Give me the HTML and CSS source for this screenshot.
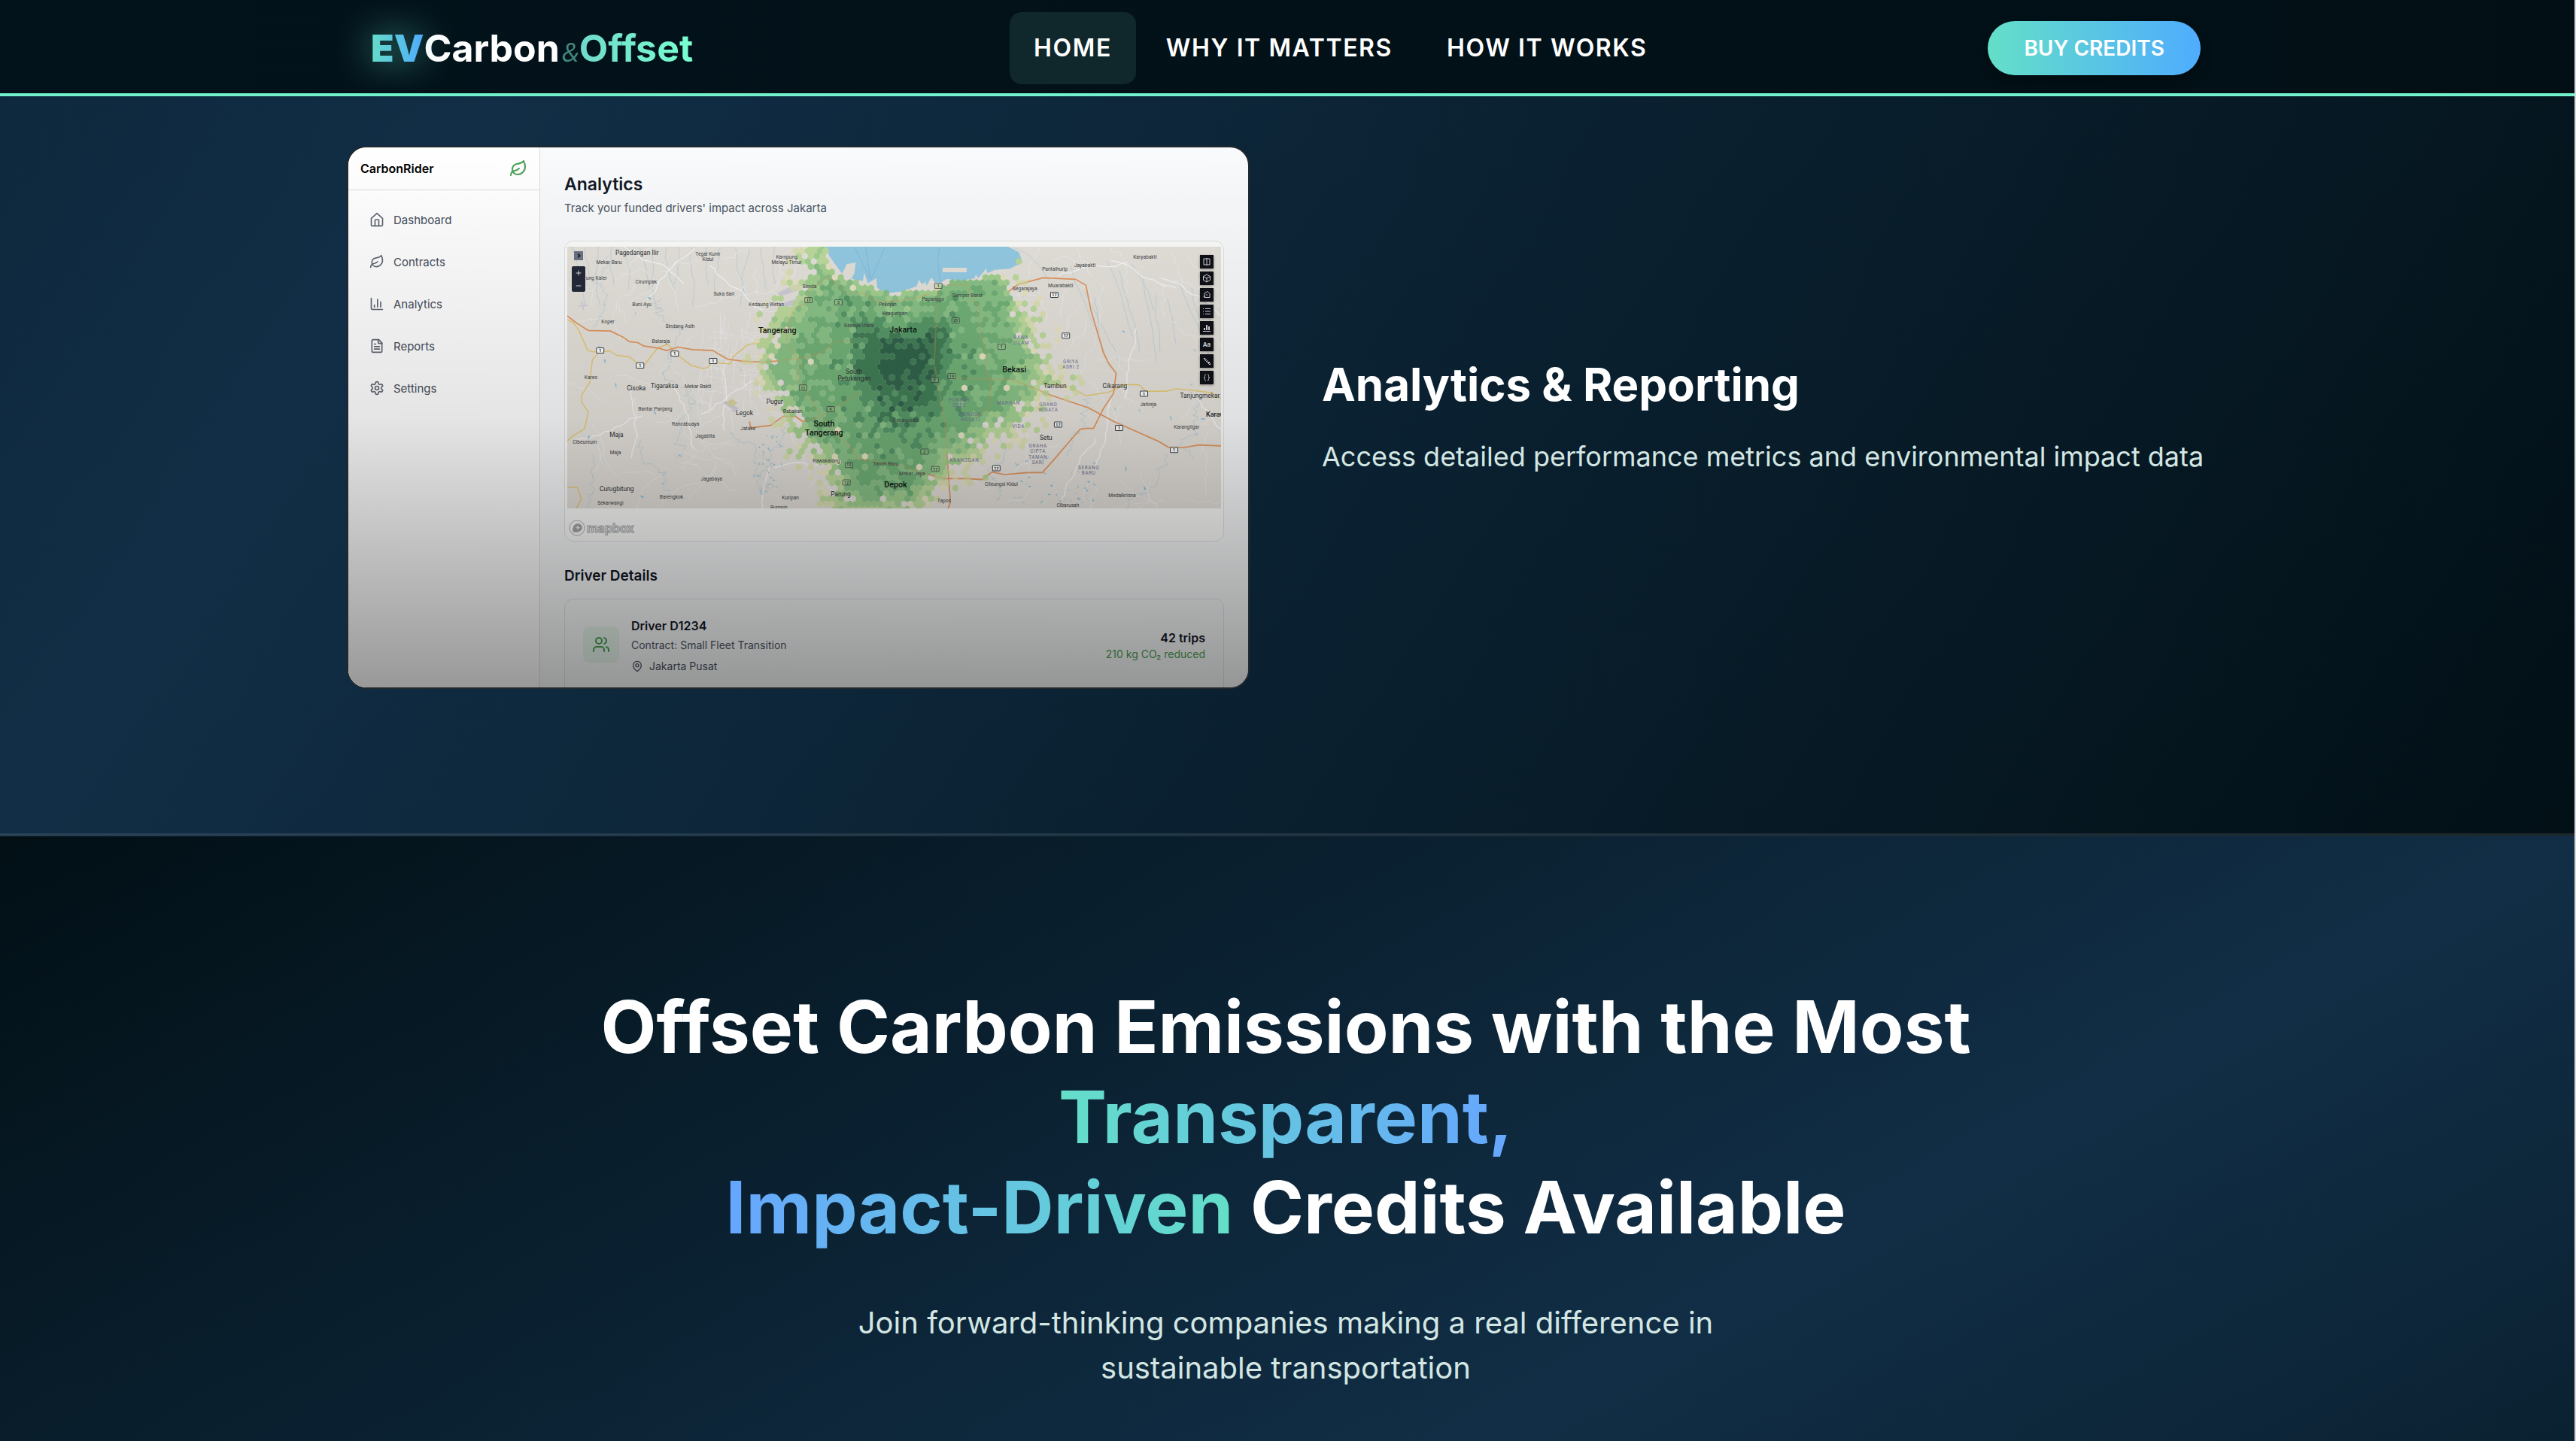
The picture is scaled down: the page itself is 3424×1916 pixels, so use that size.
FILE: index.html
```html
<!DOCTYPE html>
<html lang="en">
<head>
<meta charset="utf-8">
<meta name="viewport" content="width=device-width, initial-scale=1">
<title>EV Carbon &amp; Offset</title>
<link rel="stylesheet" href="styles.css">
</head>
<body>
<header class="site-header">
  <div class="header-inner">
    <a class="logo" href="#"><span class="logo-ev">EV</span><span class="logo-carbon">Carbon</span><span class="logo-amp">&amp;</span><span class="logo-offset">Offset</span></a>
    <nav class="main-nav">
      <a class="nav-link active" href="#home">HOME</a>
      <a class="nav-link" href="#why">WHY IT MATTERS</a>
      <a class="nav-link" href="#how">HOW IT WORKS</a>
    </nav>
    <button class="buy" type="button">BUY CREDITS</button>
  </div>
</header>

<main>
<section class="feature">
  <div class="feature-inner">
    <div class="preview">
      <aside class="side">
        <div class="side-head">
          <span class="side-title">CarbonRider</span>
          <svg class="icon leaf" viewBox="0 0 24 24"><path d="M11 20A7 7 0 0 1 9.8 6.1C15.5 5 17 4.48 19 2c1 2 2 4.18 2 8 0 5.5-4.78 10-10 10Z"/><path d="M2 21c0-3 1.85-5.36 5.08-6C9.5 14.52 12 13 13 12"/></svg>
        </div>
        <nav class="side-nav">
          <a href="#dashboard"><svg class="icon" viewBox="0 0 24 24"><path d="m3 10 9-8 9 8v10a2 2 0 0 1-2 2H5a2 2 0 0 1-2-2z"/><path d="M9 22v-9a1 1 0 0 1 1-1h4a1 1 0 0 1 1 1v9"/></svg>Dashboard</a>
          <a href="#contracts"><svg class="icon" viewBox="0 0 24 24"><path d="M11 20A7 7 0 0 1 9.8 6.1C15.5 5 17 4.48 19 2c1 2 2 4.18 2 8 0 5.5-4.78 10-10 10Z"/><path d="M2 21c0-3 1.85-5.36 5.08-6C9.5 14.52 12 13 13 12"/></svg>Contracts</a>
          <a href="#analytics"><svg class="icon" viewBox="0 0 24 24"><path d="M3 3v16a2 2 0 0 0 2 2h16"/><path d="M18 17V9"/><path d="M13 17V5"/><path d="M8 17v-3"/></svg>Analytics</a>
          <a href="#reports"><svg class="icon" viewBox="0 0 24 24"><path d="M15 2H6a2 2 0 0 0-2 2v16a2 2 0 0 0 2 2h12a2 2 0 0 0 2-2V7Z"/><path d="M14 2v4a2 2 0 0 0 2 2h4"/><path d="M10 9H8"/><path d="M16 13H8"/><path d="M16 17H8"/></svg>Reports</a>
          <a href="#settings"><svg class="icon" viewBox="0 0 24 24"><path d="M12.22 2h-.44a2 2 0 0 0-2 2v.18a2 2 0 0 1-1 1.73l-.43.25a2 2 0 0 1-2 0l-.15-.08a2 2 0 0 0-2.73.73l-.22.38a2 2 0 0 0 .73 2.73l.15.1a2 2 0 0 1 1 1.72v.51a2 2 0 0 1-1 1.74l-.15.09a2 2 0 0 0-.73 2.73l.22.38a2 2 0 0 0 2.73.73l.15-.08a2 2 0 0 1 2 0l.43.25a2 2 0 0 1 1 1.73V20a2 2 0 0 0 2 2h.44a2 2 0 0 0 2-2v-.18a2 2 0 0 1 1-1.73l.43-.25a2 2 0 0 1 2 0l.15.08a2 2 0 0 0 2.73-.73l.22-.39a2 2 0 0 0-.73-2.73l-.15-.08a2 2 0 0 1-1-1.74v-.5a2 2 0 0 1 1-1.74l.15-.09a2 2 0 0 0 .73-2.73l-.22-.38a2 2 0 0 0-2.73-.73l-.15.08a2 2 0 0 1-2 0l-.43-.25a2 2 0 0 1-1-1.73V4a2 2 0 0 0-2-2z"/><circle cx="12" cy="12" r="3"/></svg>Settings</a>
        </nav>
      </aside>

      <div class="panel">
        <h3 class="panel-title">Analytics</h3>
        <p class="panel-sub">Track your funded drivers' impact across Jakarta</p>

        <div class="map-card">
          <div class="map">
            <svg class="map-svg" viewBox="74 54 2604 1044" role="img" aria-label="Driver activity around Jakarta">
              <rect x="74" y="54" width="2604" height="1044" fill="#e6e2dc"/>
              <g id="minor" class="line"></g>
              <g class="airport">
                <path d="M912 238l84-42 12 26-84 30zM922 282l90-28 8 20-90 26zM694 676l14-8 50 30-14 12zM738 704l10 8-26-2z"/>
                <path d="M118 290l36-2M132 270l6 36" class="airport-line"/>
                <path d="M708 672l22-12 22 16-24 18z" fill="#d8d4a0"/>
              </g>
              <path class="sea" d="M1105 54l12 36 30 42 22 30 18-38 36-8-6 46-12 20 46 8 6-32 14 42 34-20 4 38 36 22 60-8 60-20 10-26 12 18 14-10 4 16 20-34 12 20h26l24-14 50 8 60-10 4-16 10 16 32-40 4 20 30-14 60-4 50-26-14-40-44-22-20-8H1105z"/>
              <path d="M1569 138h96v18h-96z" fill="#e6e2dc"/>
              <path class="sea-line" d="M1218 54l62 128M1262 54l20 130M1340 54l-56 130M1556 54l-6 60 10 90"/>
              <path class="river" d="M1852 58c60 20 100 60 140 130"/>
              <g id="heat"></g>
              <g id="roads">
                <g class="road-yellow">
                  <path d="M74 345l24 12 22 30 34 78 20 8 56-2 12-2 30 18 50 6 42 32 16 2 54-70 40-14 44 46 50 38 44 12 20-2 16-22 76 6 12-30 60-48 60-6 20-20 20 0"/>
                  <path d="M204 470l-30 34-10 90-32 50 0 30 26 40-16 66-46 28-22 20M74 1012l40 2 16 44-20 40"/>
                  <path d="M1940 592l140 22 60 34 90-14 60-30h60l30 26 80 0 40-10 60 6 80 10 40 24"/>
                </g>
                <g class="road-orange">
                  <path d="M74 330l40 30 44 28 88 2 50 24 24 18 34 4 26 14 56 8 34 10 44-14 60 10 80 4 58 34 56 8 80 4 60-4 60-8 40-4 70-16 70-52 60 0"/>
                  <path d="M988 494l-32-40-8-40 8-60 22-50 40-22 16-10 4-40 72-60 40 30 30 34 80 6 50 32 60-4 80-8 66-20"/>
                  <path d="M800 750l4 26 80-10 50-36h50l26 20 40-8 50-20 140-90"/>
                  <path d="M988 494l18 30-20 60 30 24 20 40 40 70 60 70 60 60 40 52 160 24 100 34 80 20h90l60 4 40-30 50 10 90-8h60l40-44 60-70 50-58 24-4h30l40-80 40-60 10-80-30-40-20-40-50-170-20-100-40-24-130-6-100 26-40 30"/>
                  <path d="M1586 206h78l20 54 30 30 6 120 24 70-4 60 20 50-2 100-30 30-30 12M1550 220l-14 300 40 220 24 330-16 50"/>
                  <path d="M1600 576l200 8 40-4 160 66 150 50 100 54 180 80 40 24h60l60-10 100 4"/>
                </g>
              </g>
              <use href="#roads" class="roads-over"/>
              <g class="shields">
                <g class="shield"><rect x="190" y="457" width="30" height="21" rx="3"/><text x="205" y="474">1</text></g>
                <g class="shield"><rect x="349" y="517" width="30" height="21" rx="3"/><text x="364" y="534">1</text></g>
                <g class="shield"><rect x="487" y="470" width="30" height="21" rx="3"/><text x="502" y="487">1</text></g>
                <g class="shield"><rect x="640" y="499" width="30" height="21" rx="3"/><text x="655" y="516">1</text></g>
                <g class="shield dim"><rect x="1020" y="256" width="30" height="21" rx="3"/><text x="1035" y="273">17</text></g>
                <g class="shield dim"><rect x="1139" y="265" width="30" height="21" rx="3"/><text x="1154" y="282">5</text></g>
                <g class="shield dim"><rect x="998" y="605" width="30" height="21" rx="3"/><text x="1013" y="622">11</text></g>
                <g class="shield dim"><rect x="1108" y="691" width="30" height="21" rx="3"/><text x="1123" y="708">9</text></g>
                <g class="shield dim"><rect x="1181" y="913" width="30" height="21" rx="3"/><text x="1196" y="930">12</text></g>
                <g class="shield dim"><rect x="1171" y="983" width="30" height="21" rx="3"/><text x="1186" y="1000">12</text></g>
                <g class="shield dim"><rect x="1537" y="199" width="30" height="21" rx="3"/><text x="1552" y="216">1</text></g>
                <g class="shield dim"><rect x="1606" y="337" width="30" height="21" rx="3"/><text x="1621" y="354">21</text></g>
                <g class="shield dim"><rect x="1789" y="442" width="30" height="21" rx="3"/><text x="1804" y="459">1</text></g>
                <g class="shield dim"><rect x="1522" y="574" width="30" height="21" rx="3"/><text x="1537" y="591">2</text></g>
                <g class="shield dim"><rect x="1590" y="559" width="30" height="21" rx="3"/><text x="1605" y="576">19</text></g>
                <g class="shield dim"><rect x="1482" y="860" width="30" height="21" rx="3"/><text x="1497" y="877">2</text></g>
                <g class="shield dim"><rect x="1525" y="929" width="30" height="21" rx="3"/><text x="1540" y="946">17</text></g>
                <g class="shield"><rect x="1999" y="235" width="30" height="21" rx="3"/><text x="2014" y="252">17</text></g>
                <g class="shield"><rect x="2045" y="398" width="30" height="21" rx="3"/><text x="2060" y="415">17</text></g>
                <g class="shield"><rect x="2014" y="752" width="30" height="21" rx="3"/><text x="2029" y="769">17</text></g>
                <g class="shield"><rect x="1768" y="926" width="30" height="21" rx="3"/><text x="1783" y="943">17</text></g>
                <g class="shield"><rect x="2356" y="629" width="30" height="21" rx="3"/><text x="2371" y="646">1</text></g>
                <g class="shield"><rect x="2257" y="766" width="30" height="21" rx="3"/><text x="2272" y="783">1</text></g>
                <g class="shield"><rect x="2476" y="853" width="30" height="21" rx="3"/><text x="2491" y="870">1</text></g>
              </g>
              <g class="label town">
                <text x="352" y="87">Pagedangan Ilir</text><text x="349" y="626">Cisoka</text><text x="461" y="617">Tigaraksa</text>
                <text x="780" y="726">Legok</text><text x="270" y="811">Maja</text><text x="271" y="1027">Curugbitung</text>
                <text x="900" y="679">Pugur</text><text x="1216" y="561">South</text><text x="1217" y="588">Petukangan</text>
                <text x="1163" y="1049">Parung</text><text x="2017" y="616">Tambun</text><text x="2255" y="616">Cikarang</text>
                <text x="2594" y="655">Tanjungmekar</text><text x="1981" y="823">Setu</text>
              </g>
              <g class="label village">
                <text x="240" y="123">Mekar Baru</text><text x="190" y="185">ung Kaler</text><text x="388" y="202">Cirumpak</text>
                <text x="634" y="91">Tegal Kunir</text><text x="634" y="111">Kidul</text><text x="698" y="248">Suka Sari</text>
                <text x="371" y="291">Buni Ayu</text><text x="236" y="360">Koper</text><text x="523" y="378">Sindang Asih</text>
                <text x="447" y="439">Balaraja</text><text x="867" y="290">Kedaung Wetan</text><text x="948" y="101">Kampung</text>
                <text x="948" y="122">Melayu Timur</text><text x="1039" y="218">Benda</text><text x="168" y="581">Kareo</text>
                <text x="594" y="618">Mekar Bakti</text><text x="424" y="708">Bantar Panjang</text><text x="545" y="766">Rancabuaya</text>
                <text x="794" y="784">Jatake</text><text x="623" y="814">Jagabita</text><text x="144" y="840">Cibeureum</text>
                <text x="266" y="882">Maja</text><text x="648" y="986">Jagabaya</text><text x="489" y="1059">Barengkok</text>
                <text x="246" y="1081">Sekarwangi</text><text x="963" y="1061">Kuripan</text><text x="917" y="1100">Rumpin</text>
                <text x="972" y="715">Babakan</text><text x="1106" y="915">Rawakalong</text><text x="1342" y="927">Tanah Baru</text>
                <text x="1447" y="965">Mekar Jaya</text><text x="1350" y="290">Pekojan</text><text x="1378" y="326">Keagungan</text>
                <text x="1236" y="374">Kedoya Utara</text><text x="1531" y="269">Papanggo</text><text x="1668" y="254">Semper Barat</text>
                <text x="1897" y="228">Segarajaya</text><text x="2016" y="149">Pantaihurip</text><text x="2136" y="135">Jayabakti</text>
                <text x="2039" y="216">Muarabakti</text><text x="2375" y="101">Karyabakti</text><text x="1422" y="751">Kebagusan</text>
                <text x="1803" y="1007">Cileungsi Kidul</text><text x="1575" y="1073">Tapos</text><text x="2068" y="1090">Cibarusah</text>
                <text x="2284" y="1052">Medalkrisna</text><text x="2388" y="690">Jatireja</text><text x="2541" y="779">Karangligar</text>
              </g>
              <g class="label area">
                <text x="1882" y="424">RAWA</text><text x="1882" y="445">SILAM</text><text x="2080" y="518">GRIYA</text><text x="2080" y="539">ASRI 2</text>
                <text x="1636" y="670">PONDOK</text><text x="1636" y="691">GEDE</text><text x="1831" y="683">MARHAN</text><text x="1680" y="728">PONDOK</text>
                <text x="1680" y="749">MELATI</text><text x="1990" y="689">GRAND</text><text x="1990" y="710">WISATA</text><text x="1871" y="777">VIDA</text>
                <text x="1949" y="855">GRAHA</text><text x="1949" y="876">CIPTA</text><text x="1949" y="898">TAMAN</text><text x="1949" y="919">SARI</text>
                <text x="1656" y="910">KRANGGAN</text><text x="2151" y="942">SERANG</text><text x="2151" y="963">BARU</text>
              </g>
              <g class="label city">
                <text x="911" y="398">Tangerang</text><text x="1412" y="395">Jakarta</text><text x="1855" y="555">Bekasi</text>
                <text x="1097" y="771">South</text><text x="1097" y="805">Tangerang</text><text x="1382" y="1013">Depok</text>
              </g>
              <g class="label edge"><text x="2618" y="731">Karawang</text></g>
            </svg>
            <div class="map-left">
              <button class="map-toggle" type="button" aria-label="Open panel"><svg viewBox="0 0 12 12"><path d="M5 3l3 3-3 3"/></svg></button>
              <div class="map-zoom">
                <button type="button" aria-label="Zoom in"><svg viewBox="0 0 12 12"><path d="M6 2v8M2 6h8"/></svg></button>
                <button type="button" aria-label="Zoom out"><svg viewBox="0 0 12 12"><path d="M2 6h8"/></svg></button>
              </div>
            </div>
            <div class="map-tools">
              <button type="button" aria-label="Split view"><svg viewBox="0 0 18 18"><path d="M5 5h8v8H5zM9 4v10"/></svg></button>
              <button type="button" aria-label="3D view"><svg viewBox="0 0 18 18"><path d="M9 4l4.500 2.500v5L9 14l-4.500-2.500v-5zM4.500 6.500L9 9l4.500-2.500M9 9v5"/></svg></button>
              <button type="button" aria-label="Draw shape"><svg viewBox="0 0 18 18"><path d="M6 7l4-2.500 3 3v5H6.500zM4.500 10.500l2 2.500M9 8v2"/></svg></button>
              <button type="button" aria-label="Layers"><svg viewBox="0 0 18 18"><path d="M7 5.500h7M7 9h7M7 12.500h7M4 5.500h1M4 9h1M4 12.500h1"/></svg></button>
              <button type="button" aria-label="Chart"><svg viewBox="0 0 18 18"><path d="M4 13.500h10"/><path class="bars" d="M6 12V9M9 12V5M12 12V7"/></svg></button>
              <button type="button">Aa</button>
              <button type="button" aria-label="Ruler"><svg viewBox="0 0 18 18"><path d="M5 6l1-1 8 8-1 1zM7 5l-2 2M13 10l-2 2"/></svg></button>
              <button type="button" aria-label="Code"><svg viewBox="0 0 18 18"><path d="M8 5c-2 0-1.500 1-1.500 2.500S6 9 5 9c1 0 1.500 0 1.500 1.500S6 13 8 13M10 5c2 0 1.500 1 1.500 2.500S12 9 13 9c-1 0-1.500 0-1.500 1.500S12 13 10 13"/></svg></button>
            </div>
          </div>
          <div class="map-foot">
            <svg class="mapbox-mark" viewBox="0 0 22 22"><circle cx="11" cy="11" r="10"/><path class="mark" d="M6 16c-1-4 0-7 2-9 2-2 6-2 8 0s2 5 0 7c-2 2-5 3-10 2z"/><path class="spark" d="M12 7l1 2.500 2.500 1-2.500 1L12 14l-1-2.500-2.500-1 2.500-1z"/></svg>
            <span class="mapbox-word">mapbox</span>
          </div>
        </div>

        <h4 class="drivers-title">Driver Details</h4>
        <div class="driver">
          <span class="driver-tile"><svg class="icon" viewBox="0 0 24 24"><path d="M16 21v-2a4 4 0 0 0-4-4H6a4 4 0 0 0-4 4v2"/><circle cx="9" cy="7" r="4"/><path d="M22 21v-2a4 4 0 0 0-3-3.87"/><path d="M16 3.130a4 4 0 0 1 0 7.750"/></svg></span>
          <div class="driver-info">
            <strong>Driver D1234</strong>
            <span class="contract">Contract: Small Fleet Transition</span>
            <span class="place"><svg class="icon" viewBox="0 0 24 24"><path d="M20 10c0 6-8 12-8 12s-8-6-8-12a8 8 0 0 1 16 0Z"/><circle cx="12" cy="10" r="3"/></svg>Jakarta Pusat</span>
          </div>
          <div class="driver-stats">
            <strong>42 trips</strong>
            <span>210 kg CO₂ reduced</span>
          </div>
        </div>
      </div>
    </div>

    <div class="feature-copy">
      <h2>Analytics &amp; Reporting</h2>
      <p>Access detailed performance metrics and environmental impact data</p>
    </div>
  </div>
</section>

<section class="hero">
  <h1>Offset Carbon Emissions with the Most<br><span class="grad-a">Transparent,</span><br><span class="grad-b">Impact-Driven</span> Credits Available</h1>
  <p>Join forward-thinking companies making a real difference in sustainable transportation</p>
</section>
</main>
<script src="map.js"></script>
</body>
</html>
```

FILE: styles.css
```css
* { box-sizing: border-box; }

body {
  margin: 0;
  min-height: 100vh;
  display: flex;
  flex-direction: column;
  overflow-x: hidden;
  border-right: 2px solid #dadada;
  background: #021016;
  font-family: Inter, "Liberation Sans", sans-serif;
  color: #fff;
}

h1, h2, h3, h4, p { margin: 0; }
a { color: inherit; text-decoration: none; }
button { border: 0; padding: 0; font-family: inherit; color: inherit; cursor: pointer; }
main { display: flex; flex-direction: column; flex: 1; }

/* Header */
.site-header {
  padding-right: 4px;
  background: linear-gradient(90deg, #03131b, #021016);
  box-shadow: inset 0 -4px #73f3cd;
}
.header-inner {
  max-width: 2560px;
  height: 128px;
  margin: 0 auto;
  padding: 0 64px;
  display: flex;
  align-items: center;
  justify-content: space-between;
}
.logo { display: flex; align-items: baseline; font-size: 50px; font-weight: 700; line-height: 64px; }
.logo-ev {
  font-weight: 900;
  background: linear-gradient(90deg, #66dcc8, #4facfe);
  background-clip: text;
  color: transparent;
  filter: drop-shadow(0 0 24px rgba(100, 223, 200, 0.7));
}
.logo-amp { margin-left: 3px; font: italic 400 34px "Open Sans", sans-serif; color: #44897f; }
.logo-offset { background: linear-gradient(90deg, #70dacb, #78ffcf); background-clip: text; color: transparent; }
.main-nav { display: flex; gap: 8px; }
.nav-link {
  padding: 24px 32px;
  border-radius: 16px;
  font-size: 32px;
  line-height: 48px;
  font-weight: 600;
  letter-spacing: 0.05em;
}
.nav-link.active { background: #10272c; }
.buy {
  padding: 0 48px;
  height: 72px;
  border-radius: 36px;
  background: linear-gradient(90deg, #64dfc8, #4facfe);
  box-shadow: 0 8px 16px rgba(0, 0, 0, 0.3);
  font-size: 28px;
  font-weight: 600;
}

/* Feature slide */
.feature {
  padding: 68px 0 194px;
  border-bottom: 4px solid rgba(255, 255, 255, 0.1);
  background: linear-gradient(to bottom right, #021016, #112e46, #021016) bottom / 100% 5200px no-repeat border-box;
}
.feature-inner {
  max-width: 2560px;
  margin: 0 auto;
  padding: 0 32px;
  display: grid;
  grid-template-columns: 1196fr 1202fr;
  gap: 98px;
  align-items: center;
}
.feature-copy h2 { font-size: 60px; line-height: 72px; font-weight: 700; margin-bottom: 32px; }
.feature-copy p { font-size: 36px; line-height: 56px; color: #d3e6e3; white-space: nowrap; }

/* Product preview */
.preview {
  position: relative;
  display: flex;
  aspect-ratio: 5 / 3;
  overflow: hidden;
  border-radius: 24px;
  background: #f9fafb;
  box-shadow: 0 0 0 2px #22282c;
  color: #111827;
}
.preview::after {
  content: "";
  position: absolute;
  inset: 0;
  pointer-events: none;
  background: linear-gradient(to top, rgba(0, 0, 0, 0.4), rgba(0, 0, 0, 0.1), transparent);
}
.icon { width: 20px; height: 20px; fill: none; stroke: currentColor; stroke-width: 2; stroke-linecap: round; stroke-linejoin: round; flex: none; }
.side { flex: 0 0 255px; background: #fff; border-right: 1px solid #dcdee2; }
.side-head {
  height: 57px;
  padding: 0 16px;
  display: flex;
  align-items: center;
  justify-content: space-between;
  border-bottom: 1px solid #dcdee2;
}
.side-title { font-size: 16px; font-weight: 600; color: #000; }
.leaf { width: 24px; height: 24px; color: #4a9f57; }
.side-nav { padding: 19px 16px; display: flex; flex-direction: column; gap: 16px; }
.side-nav a {
  height: 40px;
  padding: 0 12px;
  display: flex;
  align-items: center;
  gap: 12px;
  font-size: 15px;
  color: #464d5a;
}
.side-nav .icon { color: #5f6672; }
.panel { flex: 1; min-width: 0; padding: 33px 32px 0 32px; }
.panel-title { font-size: 23px; line-height: 32px; font-weight: 600; }
.panel-sub { margin-top: 4px; font-size: 15px; line-height: 24px; color: #4b5563; }
.map-card { margin-top: 31px; padding: 7px 3px 0; border: 1px solid #dfe2e4; border-radius: 12px; background: #fdfdfc; }
.map { position: relative; }
.map-svg { display: block; width: 100%; }
.map-foot { height: 43px; padding: 8px 2px 0; display: flex; align-items: center; gap: 2px; }
.mapbox-mark { width: 22px; height: 22px; fill: none; stroke: #b0b2b3; stroke-width: 1; }
.mapbox-mark .mark { fill: #a4a6a7; }
.mapbox-mark .spark { fill: #e6e8e8; stroke: none; }
.mapbox-word { font: 700 16px/22px Inter, sans-serif; color: #f1f3f3; -webkit-text-stroke: 1px #a9abac; }

/* Controls that float over the map */
.map-left { position: absolute; left: 6px; top: 6px; display: flex; flex-direction: column; align-items: center; gap: 8px; }
.map-left button { display: grid; place-items: center; }
.map-left svg { width: 10px; height: 10px; fill: none; stroke: #fff; stroke-width: 1; }
.map-left .map-toggle { width: 12px; height: 12px; background: #6a7485; }
.map-left .map-toggle svg { stroke: #111; stroke-width: 2; }
.map-zoom { width: 18px; border-radius: 2px; overflow: hidden; }
.map-zoom button { width: 18px; height: 17px; background: #242a3a; }
.map-tools { position: absolute; right: 10px; top: 11px; display: flex; flex-direction: column; gap: 4px; }
.map-tools button {
  width: 18px;
  height: 18px;
  display: grid;
  place-items: center;
  background: #0f1117;
  box-shadow: 0 1px 3px rgba(0, 0, 0, 0.4);
  color: #e4e6ea;
  font-size: 8px;
  font-weight: 600;
}
.map-tools svg { width: 18px; height: 18px; fill: none; stroke: #d4d6da; stroke-width: 1; }
.map-tools .bars { stroke-width: 2; }

/* Map drawing */
.line { fill: none; }
.minor-road { stroke: #f3f3f6; stroke-width: 2; }
.major-road { stroke: #f8f8fb; stroke-width: 4; }
.river { fill: none; stroke: #b4cfdb; stroke-width: 2; }
.pond { fill: #8cc3dd; }
.sea { fill: #95cce6; }
.sea-line { fill: none; stroke: #7db6dc; stroke-width: 2; }
.airport { fill: #cfcdd8; }
.airport-line { fill: none; stroke: #cfcdde; stroke-width: 5; }
.road-yellow, .road-orange { fill: none; stroke-linejoin: round; }
.road-yellow { stroke: #e6cb72; stroke-width: 4; }
.road-orange { stroke: #e39a63; stroke-width: 5; }
.roads-over { opacity: 0.3; }
.shield rect { fill: #fff; stroke: #3c4248; stroke-width: 3; }
.shield text { font: 700 16px Roboto, sans-serif; fill: #222; text-anchor: middle; }
.shield.dim rect { fill: #9fca92; fill-opacity: 0.5; }
.shield.dim { opacity: 0.75; }
.label text { font-family: Roboto, sans-serif; text-anchor: middle; }
.label.town { font-size: 25px; fill: #2c3034; }
.label.village { font-size: 20px; fill: #3d4246; }
.label.area { font-size: 19px; fill: #6f7594; letter-spacing: 0.1em; }
.label.city { font-size: 32px; font-weight: 500; fill: #0c1410; }
.label.edge text { font-size: 27px; font-weight: 500; fill: #14181a; text-anchor: start; }

/* Drivers */
.drivers-title { margin: 32px 0 16px; font-size: 19px; line-height: 28px; font-weight: 600; }
.driver {
  height: 200px;
  padding: 23px 24px;
  display: flex;
  align-items: flex-start;
  gap: 16px;
  border: 1px solid #dfe2e4;
  border-radius: 12px;
}
.driver strong { font-size: 16px; line-height: 24px; font-weight: 600; }
.driver-tile { width: 48px; height: 48px; margin-top: 13px; border-radius: 8px; display: grid; place-items: center; background: #e7f6ec; color: #4a9f57; }
.driver-tile .icon { width: 24px; height: 24px; }
.driver-info { flex: 1; display: flex; flex-direction: column; font-size: 14px; line-height: 20px; color: #4b5563; }
.driver-info strong { color: #111827; }
.contract { margin: 4px 0 8px; }
.place { display: flex; align-items: center; gap: 8px; }
.place .icon { width: 16px; height: 16px; }
.driver-stats { margin-top: 16px; display: flex; flex-direction: column; text-align: right; font-size: 14px; line-height: 20px; color: #4a9f57; }
.driver-stats strong { color: #111827; }

/* Hero */
.hero {
  flex: 1;
  padding: 193px 68px 64px 64px;
  text-align: center;
  background: linear-gradient(to bottom right, #021016, #112e46, #021016) top / 100% 1889px no-repeat;
}
.hero h1 { font-size: 96px; line-height: 120px; font-weight: 700; }
.hero p { max-width: 1344px; margin: 64px auto 0; font-size: 40px; line-height: 60px; color: #d3e6e3; }
.grad-a { background: linear-gradient(90deg, #64dfc8, #66a6ff); background-clip: text; color: transparent; }
.grad-b { background: linear-gradient(90deg, #66a6ff, #64dfc8); background-clip: text; color: transparent; }
```

FILE: map.js
```js
// Fills the map with local roads, rivers and the hexagonal activity layer.
(function () {
  var NS = 'http://www.w3.org/2000/svg';
  var seed = 7;
  function rnd() {
    seed = (seed * 16807) % 2147483647;
    return seed / 2147483647;
  }
  function path(parent, d, cls) {
    var p = document.createElementNS(NS, 'path');
    p.setAttribute('d', d);
    p.setAttribute('class', cls);
    parent.appendChild(p);
    return p;
  }
  function walk(x, y, angle, steps, len, turn) {
    var d = 'M' + x + ' ' + y;
    var a = angle;
    for (var i = 0; i < steps; i++) {
      a = angle + (rnd() - 0.5) * turn;
      x += Math.cos(a) * len;
      y += Math.sin(a) * len;
      d += 'L' + x.toFixed(0) + ' ' + y.toFixed(0);
    }
    return d;
  }

  var minor = document.getElementById('minor');
  var i;
  // Irrigation channels in the north
  for (i = 0; i < 16; i++) path(minor, walk(90 + i * 54, 54, 1.5 + (rnd() - 0.5) * 0.4, 5 + rnd() * 6, 22, 0.7), 'river');
  for (i = 0; i < 12; i++) path(minor, walk(2080 + i * 48, 110 + rnd() * 160, 1.2 + (rnd() - 0.5) * 0.5, 5 + rnd() * 8, 26, 0.4), 'river');
  // Meandering rivers
  [[240, 90, 1.5], [450, 260, 1.45], [370, 820, 1.4], [560, 620, 1.3], [170, 880, 1.6], [720, 800, 1], [960, 760, 1.65], [1780, 780, 1.7], [2160, 660, 1.8], [2580, 650, 1.9], [2460, 880, 1.9], [480, 480, 1.2]].forEach(function (r) {
    path(minor, walk(r[0], r[1], r[2], 38, 12, 3.4), 'river');
  });
  // Local streets
  for (i = 0; i < 130; i++) path(minor, walk(74 + rnd() * 2604, 54 + rnd() * 1044, rnd() * 6.28, 4 + rnd() * 8, 22, 1.4), 'minor-road');
  for (i = 0; i < 60; i++) path(minor, walk(600 + rnd() * 260, 300 + rnd() * 420, rnd() > 0.5 ? 0.1 : 1.6, 4, 22, 0.6), 'minor-road');
  [[300, 54, 0.6], [580, 60, 2.2], [640, 130, 0.8], [330, 620, 1.6], [500, 600, 1.1], [610, 720, -0.5], [710, 510, 1.7], [880, 930, 1.5], [900, 935, 0.1], [110, 820, -0.3], [2030, 170, -0.3], [2240, 110, 0.4], [2440, 180, 0.6], [2340, 380, 1.7], [2240, 660, 1.8], [2560, 640, 0.8], [2180, 820, 2.1]].forEach(function (r) {
    path(minor, walk(r[0], r[1], r[2], 12, 24, 0.9), 'major-road');
  });
  // Ponds
  for (i = 0; i < 46; i++) path(minor, walk(830 + rnd() * 110, 790 + rnd() * 260, 1, 2, 8, 3) + 'z', 'pond');
  for (i = 0; i < 40; i++) path(minor, walk(1850 + rnd() * 320, 900 + rnd() * 180, 0, 2, 10, 3) + 'z', 'pond');
  for (i = 0; i < 30; i++) path(minor, walk(100 + rnd() * 2500, 200 + rnd() * 860, 1, 3, 8, 3) + 'z', 'pond');

  // Activity hexagons
  var edge = [[1045, 40], [1100, 40], [1125, 140], [1175, 185], [1260, 205], [1370, 245], [1500, 225], [1640, 185], [1810, 165], [1850, 250], [1890, 330], [1920, 420], [2000, 470], [1990, 510], [1950, 540], [2040, 590], [1960, 620], [1940, 700], [1850, 780], [1770, 790], [1700, 890], [1600, 930], [1560, 1000], [1510, 1050], [1490, 1110], [1120, 1110], [1150, 1010], [1090, 920], [1000, 850], [960, 780], [920, 690], [880, 620], [840, 540], [860, 440], [890, 350], [960, 290], [1000, 220], [1010, 140]];
  function inside(x, y) {
    var c = false;
    for (var a = 0, b = edge.length - 1; a < edge.length; b = a++) {
      var p = edge[a], q = edge[b];
      if ((p[1] > y) !== (q[1] > y) && x < (q[0] - p[0]) * (y - p[1]) / (q[1] - p[1]) + p[0]) c = !c;
    }
    return c;
  }
  function edgeDistance(x, y) {
    var m = 1e9;
    for (var a = 0, b = edge.length - 1; a < edge.length; b = a++) {
      var p = edge[a], q = edge[b];
      var dx = q[0] - p[0], dy = q[1] - p[1];
      var t = Math.max(0, Math.min(1, ((x - p[0]) * dx + (y - p[1]) * dy) / (dx * dx + dy * dy)));
      m = Math.min(m, Math.hypot(x - p[0] - t * dx, y - p[1] - t * dy));
    }
    return m;
  }
  var colors = ['#e8e6bd', '#d9e2a8', '#bcdc9b', '#a0d08d', '#86c284', '#6db074', '#509562', '#3a7a50', '#2a5f45'];
  var heat = document.getElementById('heat');
  var groups = colors.map(function () { return ''; });
  var W = 24, H = 21, row = 0;
  for (var y = 50; y < 1112; y += H, row++) {
    for (var x = 780 + (row % 2) * W / 2; x < 2180; x += W) {
      var n = rnd(), n2 = rnd();
      var e = edgeDistance(x, y);
      var level;
      if (inside(x, y)) {
        var coast = y < 300 && x > 1105;
        if (!coast && e < 60 && n2 < 0.16) continue;
        var core = Math.hypot(x - 1410, (y - 490) / 1.45);
        level = core < 95 ? 7.8 : core < 155 ? 7.1 : core < 200 ? 6.1 : core < 290 ? 5.1 : core < 420 ? 4.6 : 3.9;
        level = Math.min(level, (coast ? 3.2 : 1.9) + e / 36);
        level += (n - 0.5) * 1.5;
        if (level < 4.5 && n2 > 0.97) level = 0;
      } else {
        if (y < 250 && x > 1105 && x < 1840) continue;
        if (e > (x > 1400 ? 110 : 70) || n < 0.45 + e / 200) continue;
        level = n2 * 2.2;
      }
      var k = Math.max(0, Math.min(8, Math.round(level)));
      groups[k] += 'M' + x + ' ' + (y - 14) + 'l12 7v14l-12 7l-12 -7v-14z';
    }
  }
  groups.forEach(function (d, k) {
    var p = path(heat, d, 'hex');
    p.setAttribute('fill', colors[k]);
    p.setAttribute('opacity', k < 2 ? 0.75 : 0.96);
  });

  // Put the road network under the hexagons and keep a faint copy above
  heat.parentNode.insertBefore(document.getElementById('roads'), heat);
})();
```
